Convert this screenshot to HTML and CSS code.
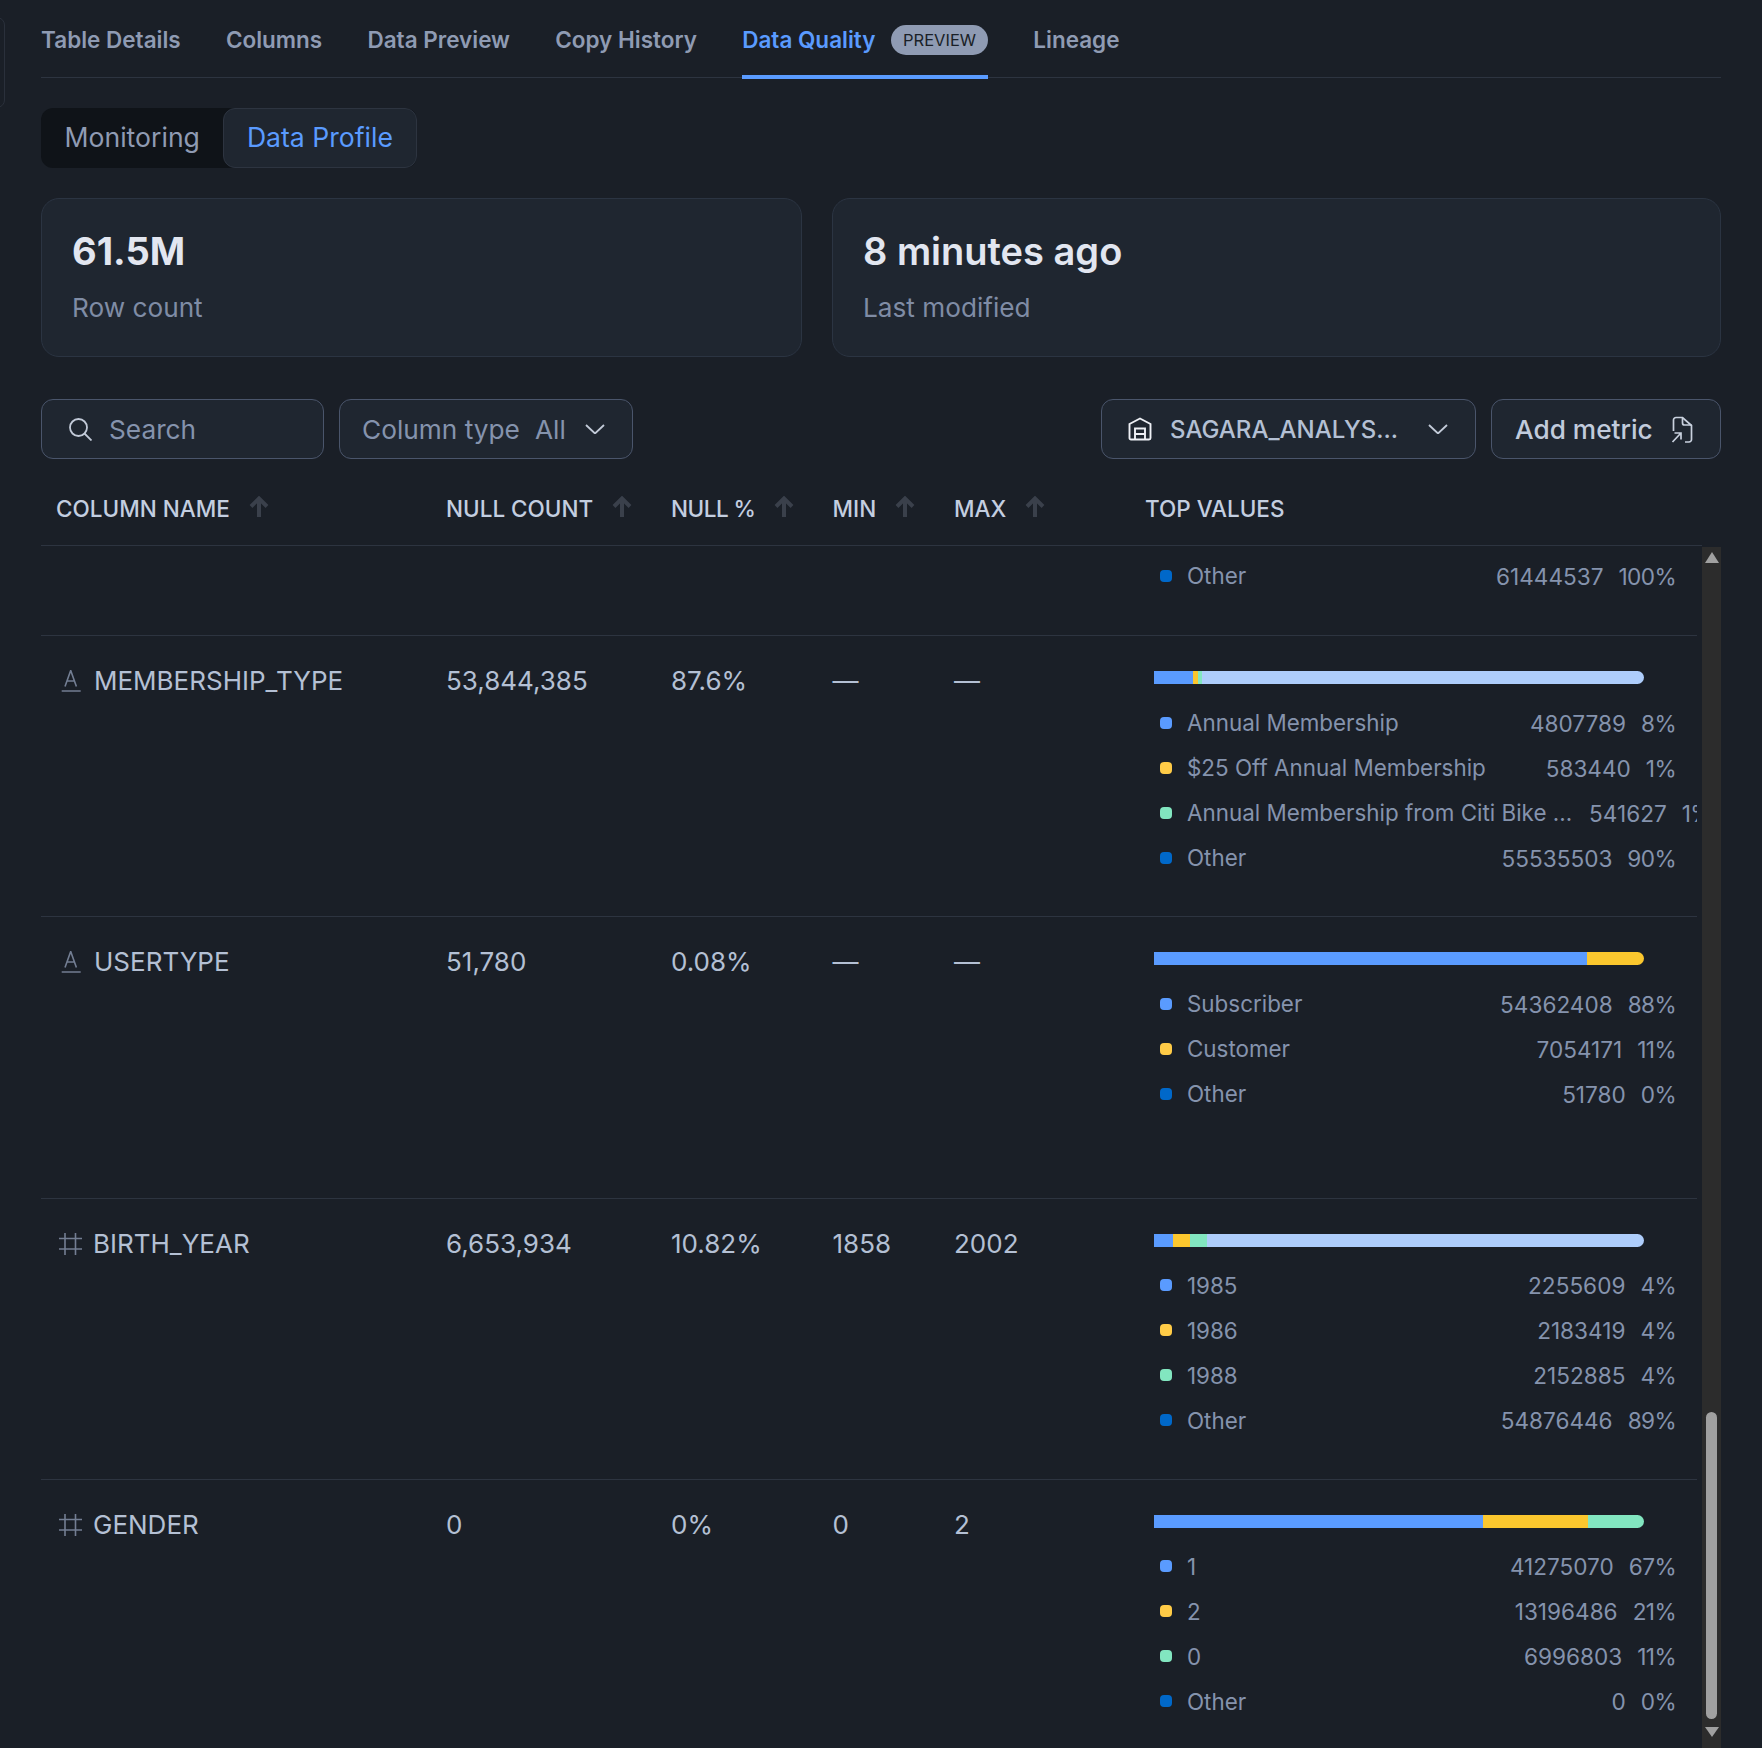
FILE: index.html
```html
<!DOCTYPE html>
<html lang="en">
<head>
    <meta charset="UTF-8">
    <meta name="viewport" content="width=device-width, initial-scale=1.0">
    <title>Data Quality - Data Profile</title>
    <link rel="stylesheet" href="styles.css">
</head>
<body>
    <div class="edge-sliver"></div>
    <div class="page">
        <nav class="tabs">
            <a class="tab">Table Details</a>
            <a class="tab">Columns</a>
            <a class="tab">Data Preview</a>
            <a class="tab">Copy History</a>
            <a class="tab active">Data Quality <span class="badge">PREVIEW</span></a>
            <a class="tab">Lineage</a>
        </nav>

        <div class="segment">
            <div class="segment-item">Monitoring</div>
            <div class="segment-item selected">Data Profile</div>
        </div>

        <div class="cards">
            <div class="card card-rows">
                <div class="card-value">61.5M</div>
                <div class="card-label">Row count</div>
            </div>
            <div class="card card-modified">
                <div class="card-value">8 minutes ago</div>
                <div class="card-label">Last modified</div>
            </div>
        </div>

        <div class="toolbar">
            <div class="control search">
                <svg class="icon-search" viewBox="0 0 24 24" width="24" height="24"><circle cx="10.5" cy="10.5" r="8.5"/><path d="M16.5 16.5L23.5 23.5"/></svg>
                <span>Search</span>
            </div>
            <div class="control type-filter">
                <span>Column type</span><span class="type-value">All</span>
                <svg class="chevron" viewBox="0 0 20 10" width="20" height="10"><path d="M1 1l9 8.5L19 1"/></svg>
            </div>
            <div class="spacer"></div>
            <div class="control warehouse">
                <svg class="icon-warehouse" viewBox="0 0 24 24" width="24" height="24"><path d="M1.500 7L12 1.500 22.500 7V21a1.500 1.500 0 0 1-1.500 1.500H3A1.500 1.500 0 0 1 1.500 21z"/><path d="M7 22.500V11.500h10v11M7 17h10"/></svg>
                <span class="warehouse-name">SAGARA_ANALYS...</span>
                <svg class="chevron" viewBox="0 0 20 10" width="20" height="10"><path d="M1 1l9 8.5L19 1"/></svg>
            </div>
            <div class="control add-metric">
                <span>Add metric</span>
                <svg class="icon-file" viewBox="0 0 22 27" width="22" height="27"><path d="M2.500 15V4A2.500 2.500 0 0 1 5 1.500H11.500L20.500 9.500V23.500A2.500 2.500 0 0 1 18 26H14"/><path d="M11.500 1.500V7a2 2 0 0 0 2 2h7"/><path d="M1.500 26l8-8.500M3.500 17h6.500v6.500"/></svg>
            </div>
        </div>

        <div class="grid-cols table-head">
            <div class="th">COLUMN NAME <svg class="sort" viewBox="0 0 20 22" width="20" height="22"><path d="M10 21V3M2 10.500L10 2.500l8 8"/></svg></div>
            <div class="th">NULL COUNT <svg class="sort" viewBox="0 0 20 22" width="20" height="22"><path d="M10 21V3M2 10.500L10 2.500l8 8"/></svg></div>
            <div class="th th-pct">NULL % <svg class="sort" viewBox="0 0 20 22" width="20" height="22"><path d="M10 21V3M2 10.500L10 2.500l8 8"/></svg></div>
            <div class="th">MIN <svg class="sort" viewBox="0 0 20 22" width="20" height="22"><path d="M10 21V3M2 10.500L10 2.500l8 8"/></svg></div>
            <div class="th">MAX <svg class="sort" viewBox="0 0 20 22" width="20" height="22"><path d="M10 21V3M2 10.500L10 2.500l8 8"/></svg></div>
            <div class="th">TOP VALUES</div>
        </div>

        <div class="table-wrap">
            <div class="table-body">
                <!-- row scrolled mostly out of view -->
                <div class="grid-cols row row-partial">
                    <div></div><div></div><div></div><div></div><div></div>
                    <div class="top-values">
                        <div class="legend">
                            <div class="legend-row"><i class="dot other"></i><span class="lg-name">Other</span><span class="lg-count">61444537</span><span class="lg-pct">100%</span></div>
                        </div>
                    </div>
                </div>

                <div class="grid-cols row">
                    <div class="cell name"><svg class="type-icon" viewBox="0 0 22 22" width="22" height="22"><path d="M6 16.500L11.700 0.500l5.700 16M7.900 11h7.600M2.700 21h19"/></svg>MEMBERSHIP_TYPE</div>
                    <div class="cell">53,844,385</div>
                    <div class="cell">87.6%</div>
                    <div class="cell">—</div>
                    <div class="cell">—</div>
                    <div class="top-values">
                        <div class="bar">
                            <span class="seg blue" style="width: 38.500px"></span><span class="seg yellow" style="width: 5px"></span><span class="seg green" style="width: 4.500px"></span><span class="seg light"></span>
                        </div>
                        <div class="legend">
                            <div class="legend-row"><i class="dot blue"></i><span class="lg-name">Annual Membership</span><span class="lg-count">4807789</span><span class="lg-pct">8%</span></div>
                            <div class="legend-row"><i class="dot yellow"></i><span class="lg-name">$25 Off Annual Membership</span><span class="lg-count">583440</span><span class="lg-pct">1%</span></div>
                            <div class="legend-row"><i class="dot green"></i><span class="lg-name">Annual Membership from Citi Bike ...</span><span class="lg-count">541627</span><span class="lg-pct">1%</span></div>
                            <div class="legend-row"><i class="dot other"></i><span class="lg-name">Other</span><span class="lg-count">55535503</span><span class="lg-pct">90%</span></div>
                        </div>
                    </div>
                </div>

                <div class="grid-cols row">
                    <div class="cell name"><svg class="type-icon" viewBox="0 0 22 22" width="22" height="22"><path d="M6 16.500L11.700 0.500l5.700 16M7.900 11h7.600M2.700 21h19"/></svg>USERTYPE</div>
                    <div class="cell">51,780</div>
                    <div class="cell">0.08%</div>
                    <div class="cell">—</div>
                    <div class="cell">—</div>
                    <div class="top-values">
                        <div class="bar">
                            <span class="seg blue" style="width: 433px"></span><span class="seg yellow end"></span>
                        </div>
                        <div class="legend">
                            <div class="legend-row"><i class="dot blue"></i><span class="lg-name">Subscriber</span><span class="lg-count">54362408</span><span class="lg-pct">88%</span></div>
                            <div class="legend-row"><i class="dot yellow"></i><span class="lg-name">Customer</span><span class="lg-count">7054171</span><span class="lg-pct">11%</span></div>
                            <div class="legend-row"><i class="dot other"></i><span class="lg-name">Other</span><span class="lg-count">51780</span><span class="lg-pct">0%</span></div>
                        </div>
                    </div>
                </div>

                <div class="grid-cols row">
                    <div class="cell name"><svg class="type-icon num" viewBox="0 0 23 22" width="23" height="22"><path d="M6 0v22M16.500 0v22M0 5.500h23M0 16h23"/></svg>BIRTH_YEAR</div>
                    <div class="cell">6,653,934</div>
                    <div class="cell">10.82%</div>
                    <div class="cell">1858</div>
                    <div class="cell">2002</div>
                    <div class="top-values">
                        <div class="bar">
                            <span class="seg blue" style="width: 18.500px"></span><span class="seg yellow" style="width: 17.500px"></span><span class="seg green" style="width: 16.500px"></span><span class="seg light"></span>
                        </div>
                        <div class="legend">
                            <div class="legend-row"><i class="dot blue"></i><span class="lg-name">1985</span><span class="lg-count">2255609</span><span class="lg-pct">4%</span></div>
                            <div class="legend-row"><i class="dot yellow"></i><span class="lg-name">1986</span><span class="lg-count">2183419</span><span class="lg-pct">4%</span></div>
                            <div class="legend-row"><i class="dot green"></i><span class="lg-name">1988</span><span class="lg-count">2152885</span><span class="lg-pct">4%</span></div>
                            <div class="legend-row"><i class="dot other"></i><span class="lg-name">Other</span><span class="lg-count">54876446</span><span class="lg-pct">89%</span></div>
                        </div>
                    </div>
                </div>

                <div class="grid-cols row">
                    <div class="cell name"><svg class="type-icon num" viewBox="0 0 23 22" width="23" height="22"><path d="M6 0v22M16.500 0v22M0 5.500h23M0 16h23"/></svg>GENDER</div>
                    <div class="cell">0</div>
                    <div class="cell">0%</div>
                    <div class="cell">0</div>
                    <div class="cell">2</div>
                    <div class="top-values">
                        <div class="bar">
                            <span class="seg blue" style="width: 329px"></span><span class="seg yellow" style="width: 105px"></span><span class="seg green end"></span>
                        </div>
                        <div class="legend">
                            <div class="legend-row"><i class="dot blue"></i><span class="lg-name">1</span><span class="lg-count">41275070</span><span class="lg-pct">67%</span></div>
                            <div class="legend-row"><i class="dot yellow"></i><span class="lg-name">2</span><span class="lg-count">13196486</span><span class="lg-pct">21%</span></div>
                            <div class="legend-row"><i class="dot green"></i><span class="lg-name">0</span><span class="lg-count">6996803</span><span class="lg-pct">11%</span></div>
                            <div class="legend-row"><i class="dot other"></i><span class="lg-name">Other</span><span class="lg-count">0</span><span class="lg-pct">0%</span></div>
                        </div>
                    </div>
                </div>
            </div>

            <div class="scrollbar">
                <svg class="arrow arrow-up" viewBox="0 0 14 11" width="14" height="11"><path d="M7 0l7 11H0z"/></svg>
                <div class="thumb"></div>
                <svg class="arrow arrow-down" viewBox="0 0 14 10" width="14" height="10"><path d="M7 10L0 0h14z"/></svg>
            </div>
        </div>
    </div>
</body>
</html>
```

FILE: styles.css
```css
html, body {
    margin: 0;
    height: 100%;
    overflow: hidden;
}
body {
    font-family: Inter, 'Noto Sans', sans-serif;
    background: #1a1f27;
    color: #8593ad;
}
.edge-sliver {
    position: absolute;
    left: -12px;
    top: 17px;
    width: 15px;
    height: 89px;
    border: 1px solid #2a303b;
    border-radius: 8px;
}
.page {
    height: 100%;
    box-sizing: border-box;
    margin-left: 41px;
    width: 1680px;
    display: flex;
    flex-direction: column;
}

/* tabs */
.tabs {
    display: flex;
    gap: 45.200px;
    height: 78px;
    flex: none;
    box-sizing: border-box;
    border-bottom: 1px solid #2d3440;
}
.tab {
    height: 79px;
    box-sizing: border-box;
    padding-top: 4px;
    border-bottom: 4px solid transparent;
    display: flex;
    align-items: center;
    font-size: 22.500px;
    font-weight: 600;
    color: #8f9bb3;
}
.tab.active {
    color: #5a9bff;
    border-bottom-color: #5a9bff;
}
.badge {
    margin-left: 15.500px;
    background: #8f9bb3;
    color: #1a1f27;
    font-size: 16.500px;
    font-weight: 400;
    line-height: 30px;
    padding: 0 12px;
    border-radius: 15px;
}

/* monitoring / data profile switch */
.segment {
    display: flex;
    align-self: flex-start;
    margin-top: 30px;
    height: 60px;
    flex: none;
    background: #0f1318;
    border-radius: 12px;
    font-size: 26.600px;
}
.segment-item {
    padding: 0 23.500px;
    line-height: 58px;
    color: #8f9bb3;
    box-sizing: border-box;
}
.segment-item.selected {
    color: #5a9bff;
    background: #1f2630;
    border: 1px solid #2d3440;
    border-radius: 12px;
    line-height: 56px;
    padding: 0 22.500px;
}

/* summary cards */
.cards {
    display: flex;
    gap: 30px;
    margin-top: 30px;
    flex: none;
}
.card {
    height: 159px;
    box-sizing: border-box;
    background: #1f2630;
    border: 1px solid #2b3442;
    border-radius: 18px;
    padding: 25px 30px;
}
.card-rows { width: 761px; }
.card-modified { flex: 1; }
.card-value {
    font-size: 38px;
    font-weight: 600;
    line-height: 54px;
    color: #e2e6f0;
}
.card-rows .card-value { font-weight: 700; }
.card-label {
    font-size: 26.200px;
    line-height: 40px;
    margin-top: 10px;
    color: #7f8ca5;
}

/* toolbar */
.toolbar {
    display: flex;
    gap: 15px;
    margin-top: 42px;
    flex: none;
}
.spacer { flex: 1; }
.control {
    height: 60px;
    box-sizing: border-box;
    display: flex;
    align-items: center;
    background: #1f2630;
    border: 1px solid #4a556b;
    border-radius: 12px;
    font-size: 26.250px;
    color: #8593ad;
}
.control svg {
    fill: none;
    flex: none;
}
.search {
    width: 283px;
    padding-left: 26px;
    gap: 17px;
}
.icon-search { stroke: #c2cad8; stroke-width: 1.800; }
.type-filter {
    width: 294px;
    padding-left: 22px;
}
.type-value { margin-left: 15px; }
.chevron { stroke: #c2cad8; stroke-width: 1.800; }
.type-filter .chevron { margin-left: 19.500px; }
.warehouse {
    width: 375px;
    padding-left: 26px;
    color: #b4c0d4;
    font-weight: 500;
}
.warehouse-name { margin-left: 18px; width: 257.500px; white-space: nowrap; font-size: 24px; }
.icon-warehouse { stroke: #eef0f5; stroke-width: 1.900; }
.add-metric {
    width: 230px;
    padding-left: 23px;
    gap: 18px;
    color: #c1cbdc;
    font-weight: 500;
}
.icon-file { stroke: #c9d1de; stroke-width: 1.700; }

/* table */
.grid-cols {
    display: grid;
    grid-template-columns: 390px 225px 161.500px 121.500px 191px 552px;
    padding-left: 15px;
}
.table-head {
    margin-top: 27px;
    height: 60px;
    box-sizing: border-box;
    flex: none;
    align-items: center;
    width: 1661px;
    padding-bottom: 15px;
    border-bottom: 1px solid #2d3440;
}
.th {
    display: flex;
    align-items: center;
    gap: 19px;
    font-size: 22.500px;
    font-weight: 500;
    color: #c3cee0;
    white-space: nowrap;
}
.th-pct { letter-spacing: -0.500px; }
.sort {
    fill: none;
    stroke: #3a404b;
    stroke-width: 4;
    flex: none;
    margin-top: -2px;
}
.table-wrap {
    flex: 1;
    min-height: 0;
    display: flex;
    gap: 5px;
}
.table-body {
    width: 1656px;
    overflow: hidden;
}
.row {
    height: 281.330px;
    box-sizing: border-box;
    border-bottom: 1px solid #2d3440;
    align-items: start;
}
.row-partial { height: 90px; }
.cell {
    display: flex;
    align-items: center;
    font-size: 26px;
    line-height: 40px;
    margin-top: 25px;
    color: #b4c0d4;
}
.cell.name { margin-left: 3px; }
.type-icon {
    fill: none;
    stroke: #737e93;
    stroke-width: 1.600;
    flex: none;
    margin-right: 13px;
}
.type-icon.num { margin-right: 11px; }

/* top values */
.top-values {
    padding-left: 9px;
    overflow: hidden;
    min-width: 0;
}
.bar {
    display: flex;
    width: 490px;
    height: 13px;
    margin-top: 35px;
    border-radius: 0 7px 7px 0;
    overflow: hidden;
}
.seg { display: block; height: 100%; flex: none; }
.seg.light, .seg.end { flex: 1; }
.seg.blue { background: #5a9bff; }
.seg.yellow { background: #fbc72e; }
.seg.green { background: #82e6c0; }
.seg.light { background: #aecdfb; }
.legend {
    width: 516px;
    margin: 16px 0 0 6px;
    font-size: 22.600px;
    color: #8593ad;
}
.row-partial .legend { margin-top: 7px; }
.legend-row {
    display: flex;
    align-items: center;
    height: 45px;
    white-space: nowrap;
}
.dot {
    width: 12px;
    height: 12px;
    border-radius: 4px;
    margin-right: 15px;
    flex: none;
}
.dot.blue { background: #5a9bff; }
.dot.yellow { background: #ffcb47; }
.dot.green { background: #82e6c0; }
.dot.other { background: #0068c9; }
.lg-name { flex: 1 0 auto; padding-right: 17px; font-size: 22.400px; }
.lg-count { margin-top: 1px; }
.lg-pct { margin: 1px 0 0 15px; letter-spacing: -0.600px; }

/* scrollbar */
.scrollbar {
    width: 19px;
    margin-top: 1px;
    background: #2c2c2c;
    display: flex;
    flex-direction: column;
    align-items: center;
}
.arrow { fill: #a0a0a0; flex: none; }
.arrow-up { margin-top: 5px; }
.thumb {
    width: 11px;
    height: 307px;
    margin-top: auto;
    background: #a0a0a0;
    border-radius: 6px;
}
.arrow-down { margin: 8px 0 11px; }
```
